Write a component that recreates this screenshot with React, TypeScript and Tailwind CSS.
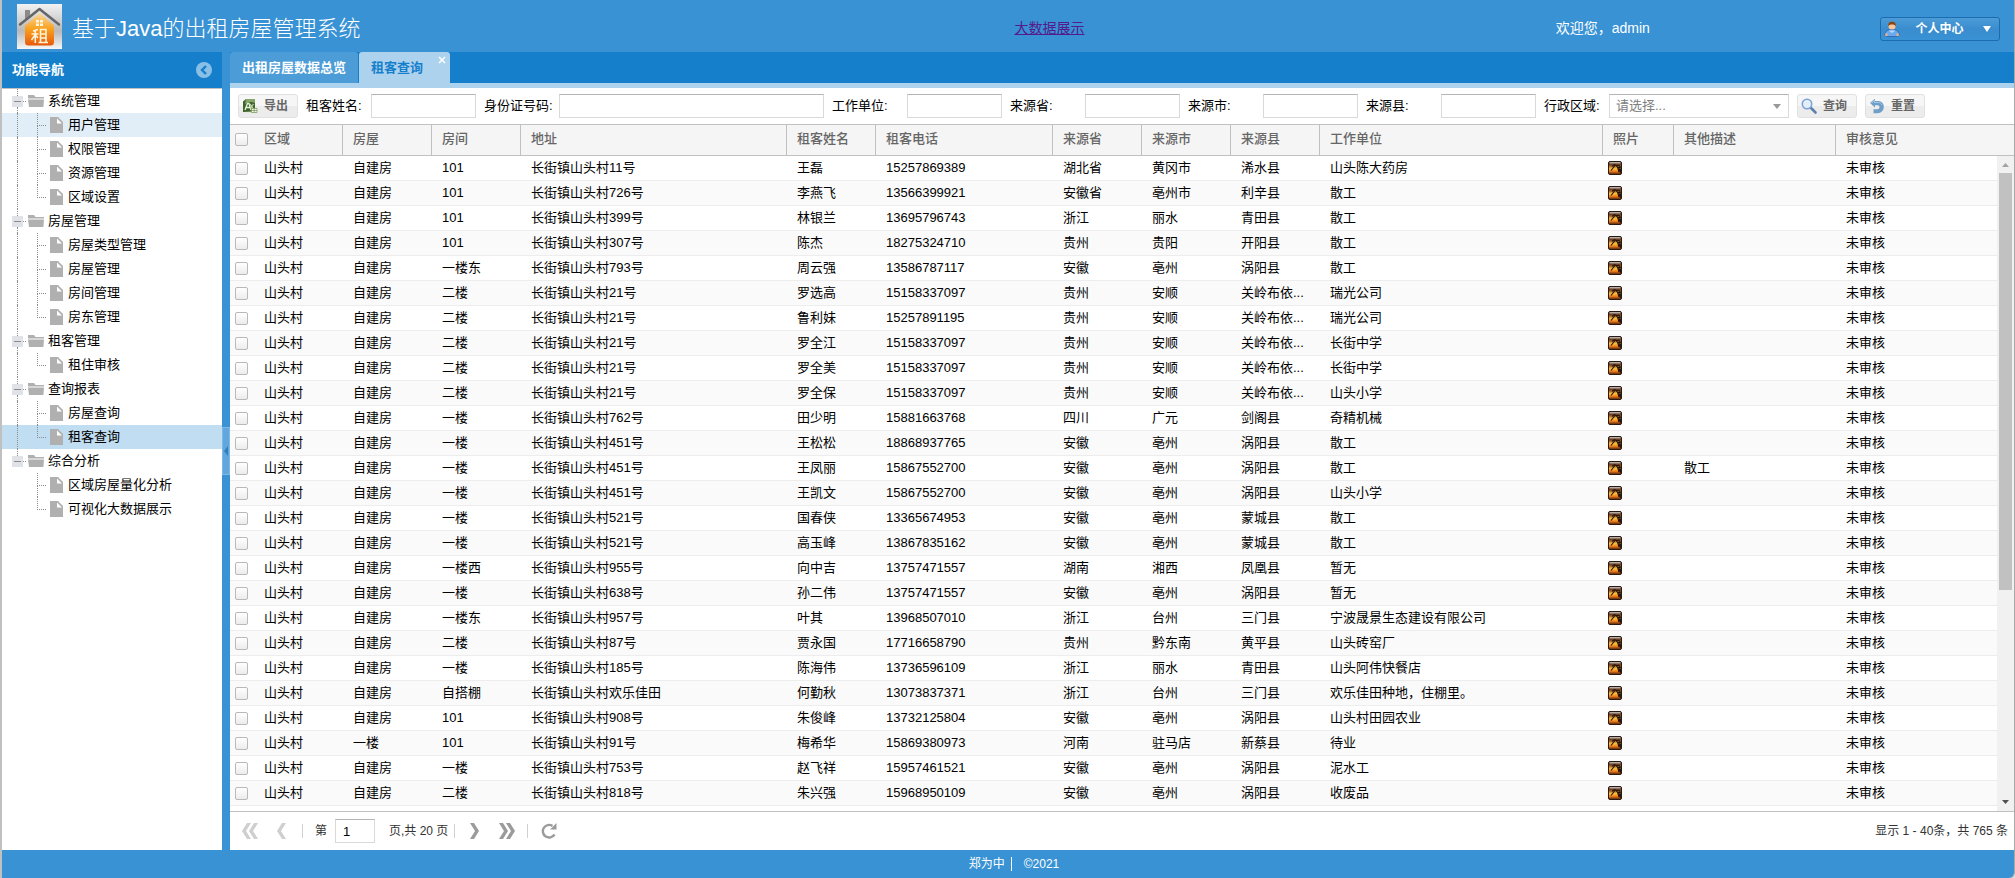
import { useId } from "react";

type Group = { name: string; items: string[] };

const groups: Group[] = [
  { name: "系统管理", items: ["用户管理", "权限管理", "资源管理", "区域设置"] },
  { name: "房屋管理", items: ["房屋类型管理", "房屋管理", "房间管理", "房东管理"] },
  { name: "租客管理", items: ["租住审核"] },
  { name: "查询报表", items: ["房屋查询", "租客查询"] },
  { name: "综合分析", items: ["区域房屋量化分析", "可视化大数据展示"] },
];

const columns = [
  { name: "区域", width: 89 },
  { name: "房屋", width: 89 },
  { name: "房间", width: 89 },
  { name: "地址", width: 266 },
  { name: "租客姓名", width: 89 },
  { name: "租客电话", width: 177 },
  { name: "来源省", width: 89 },
  { name: "来源市", width: 89 },
  { name: "来源县", width: 89 },
  { name: "工作单位", width: 283 },
  { name: "照片", width: 71 },
  { name: "其他描述", width: 162 },
  { name: "审核意见", width: 161 },
];

// 房屋, 房间, 门牌, 姓名, 电话, 省, 市, 县, 工作单位, 其他描述
const tenants: string[][] = [
  ["自建房", "101", "11号", "王磊", "15257869389", "湖北省", "黄冈市", "浠水县", "山头陈大药房", ""],
  ["自建房", "101", "726号", "李燕飞", "13566399921", "安徽省", "亳州市", "利辛县", "散工", ""],
  ["自建房", "101", "399号", "林银兰", "13695796743", "浙江", "丽水", "青田县", "散工", ""],
  ["自建房", "101", "307号", "陈杰", "18275324710", "贵州", "贵阳", "开阳县", "散工", ""],
  ["自建房", "一楼东", "793号", "周云强", "13586787117", "安徽", "亳州", "涡阳县", "散工", ""],
  ["自建房", "二楼", "21号", "罗选高", "15158337097", "贵州", "安顺", "关岭布依...", "瑞光公司", ""],
  ["自建房", "二楼", "21号", "鲁利妹", "15257891195", "贵州", "安顺", "关岭布依...", "瑞光公司", ""],
  ["自建房", "二楼", "21号", "罗全江", "15158337097", "贵州", "安顺", "关岭布依...", "长街中学", ""],
  ["自建房", "二楼", "21号", "罗全美", "15158337097", "贵州", "安顺", "关岭布依...", "长街中学", ""],
  ["自建房", "二楼", "21号", "罗全保", "15158337097", "贵州", "安顺", "关岭布依...", "山头小学", ""],
  ["自建房", "一楼", "762号", "田少明", "15881663768", "四川", "广元", "剑阁县", "奇精机械", ""],
  ["自建房", "一楼", "451号", "王松松", "18868937765", "安徽", "亳州", "涡阳县", "散工", ""],
  ["自建房", "一楼", "451号", "王凤丽", "15867552700", "安徽", "亳州", "涡阳县", "散工", "散工"],
  ["自建房", "一楼", "451号", "王凯文", "15867552700", "安徽", "亳州", "涡阳县", "山头小学", ""],
  ["自建房", "一楼", "521号", "国春侠", "13365674953", "安徽", "亳州", "蒙城县", "散工", ""],
  ["自建房", "一楼", "521号", "高玉峰", "13867835162", "安徽", "亳州", "蒙城县", "散工", ""],
  ["自建房", "一楼西", "955号", "向中吉", "13757471557", "湖南", "湘西", "凤凰县", "暂无", ""],
  ["自建房", "一楼", "638号", "孙二伟", "13757471557", "安徽", "亳州", "涡阳县", "暂无", ""],
  ["自建房", "一楼东", "957号", "叶其", "13968507010", "浙江", "台州", "三门县", "宁波晟景生态建设有限公司", ""],
  ["自建房", "二楼", "87号", "贾永国", "17716658790", "贵州", "黔东南", "黄平县", "山头砖窑厂", ""],
  ["自建房", "一楼", "185号", "陈海伟", "13736596109", "浙江", "丽水", "青田县", "山头阿伟快餐店", ""],
  ["自建房", "自搭棚", "欢乐佳田", "何勤秋", "13073837371", "浙江", "台州", "三门县", "欢乐佳田种地，住棚里。", ""],
  ["自建房", "101", "908号", "朱俊峰", "13732125804", "安徽", "亳州", "涡阳县", "山头村田园农业", ""],
  ["一楼", "101", "91号", "梅希华", "15869380973", "河南", "驻马店", "新蔡县", "待业", ""],
  ["自建房", "一楼", "753号", "赵飞祥", "15957461521", "安徽", "亳州", "涡阳县", "泥水工", ""],
  ["自建房", "二楼", "818号", "朱兴强", "15968950109", "安徽", "亳州", "涡阳县", "收废品", ""],
];

function Logo() {
  return (
    <svg viewBox="0 0 45 45" className="size-[45px] shrink-0" aria-hidden="true">
      <defs>
        <linearGradient id="logoBg" x1="0" y1="0" x2="0" y2="1">
          <stop offset="0" stopColor="#f2f2f2" />
          <stop offset="0.6" stopColor="#b9b9b9" />
          <stop offset="1" stopColor="#f6f6f6" />
        </linearGradient>
        <linearGradient id="logoHouse" x1="0" y1="0" x2="0" y2="1">
          <stop offset="0" stopColor="#fbd9a0" />
          <stop offset="0.5" stopColor="#f9a01c" />
          <stop offset="1" stopColor="#e8590c" />
        </linearGradient>
      </defs>
      <rect width="45" height="45" fill="url(#logoBg)" />
      <path d="M8 6h5v5l-5 5z" fill="#8a8a8a" />
      <path d="M22.500 9 L37 21.500 V38 a3.500 3.500 0 0 1-3.500 3.500 H11.500 A3.500 3.500 0 0 1 8 38 V21.500Z" fill="url(#logoHouse)" />
      <path d="M3 20.500 22.500 5 42 20.500" fill="none" stroke="#666" strokeWidth="2.500" strokeLinecap="round" strokeLinejoin="round" />
      <path d="M19 16h3v2.500h-3zM23 16h3v2.500h-3zM19 19.500h3V22h-3zM23 19.500h3V22h-3z" fill="#fff6dc" />
      <path
        d="M21 25.500 16 27M14.500 30h7M18.300 26.500V39M18 31l-3.500 5M18.500 31l2.500 3M23.500 38.500V25.500H29V38.500M23.500 30H29M23.500 34H29M21.500 38.500H31"
        stroke="#fff3d8"
        strokeWidth="1.600"
        fill="none"
      />
    </svg>
  );
}

function FolderIcon() {
  return (
    <svg viewBox="0 0 16 12" className="h-3 w-4 shrink-0" aria-hidden="true">
      <path d="M0 0h6l1.500 2H16v1.500H0z" fill="#b0b0b0" />
      <path d="M0 4.500h16l-.6 7.500H1z" fill="#b0b0b0" />
    </svg>
  );
}

function PageIcon() {
  return (
    <svg viewBox="0 0 13 16" className="h-4 w-[13px] shrink-0" aria-hidden="true">
      <path d="M0 0h8l5 5v11H0z" fill="#b0b0b0" />
      <path d="M7 1.500v5h5z" fill="#fff" />
    </svg>
  );
}

function ExcelIcon() {
  return (
    <svg viewBox="0 0 16 16" className="size-4 shrink-0" aria-hidden="true">
      <path d="M1 3.500 4 1.500h8.500V10H15v5H9l-8-1z" fill="#dfe8d4" />
      <path d="M1 3.500 4 1h9v9l-2 3.500-10 .5z" fill="#3f6329" />
      <path d="M4 1h9v4C9 3 6 4 3 6z" fill="#86a66c" />
      <path d="M3 12 5.500 5.500h1.500L9 12M4 9.500h4" stroke="#e9f2df" strokeWidth="1.300" fill="none" />
      <path d="M8 6l3.500 5M11.500 6 8 11" stroke="#c3dbae" strokeWidth="1.200" />
      <path d="M9.500 10.500h5.500v4H9.500zM12.200 10.500v4M9.500 12.500H15" stroke="#7e9d62" fill="#f4f8ef" strokeWidth="0.800" />
    </svg>
  );
}

function SearchIcon() {
  return (
    <svg viewBox="0 0 16 16" className="size-4 shrink-0" aria-hidden="true">
      <path d="m9.500 9.500 5 5" stroke="#5f7fae" strokeWidth="2.600" strokeLinecap="round" />
      <circle cx="6" cy="6" r="4.700" fill="#e4eefb" stroke="#7ba3d6" strokeWidth="1.600" />
    </svg>
  );
}

function ResetIcon() {
  return (
    <svg viewBox="0 0 16 16" className="size-4 shrink-0" aria-hidden="true">
      <path d="M1 5 6 .8v2.200h3.500a5.500 5.500 0 0 1 5.300 5.800c0 3.700-2.500 6.400-6.300 6.400H4.500v-4h3.700c1.500 0 2.300-.8 2.300-2 0-1.200-.8-2-2.300-2H6v2.200z" fill="#6f9fc6" />
      <path d="M2.500 5 5.500 2.500v2h4c1.500 0 3 1 3.600 2.500" fill="none" stroke="#a9cbe4" strokeWidth="0.900" />
    </svg>
  );
}

function UserIcon() {
  return (
    <svg viewBox="0 0 16 16" className="size-4 shrink-0" aria-hidden="true">
      <path d="M1 14c0-3.500 2.500-5.500 7-5.500s7 2 7 5.500l-2 1.500H3z" fill="#6ba9ee" stroke="#2b5fae" strokeWidth="0.800" />
      <path d="M1 12.500h2.500V15H1.500zM12.500 12.500H15l-.5 2.500h-2z" fill="#f4b183" />
      <path d="M4.500 9.500 8 12l3.500-2.500" fill="#b7dafb" />
      <circle cx="8" cy="5" r="3.600" fill="#f8c79c" />
      <path d="M4.200 5.500C3.800 2 5.500.8 8 .8s4.200 1.200 3.800 4.700C11 4 10 3.500 8 3.500s-3 .5-3.800 2z" fill="#8a4413" />
    </svg>
  );
}

function PhotoIcon() {
  return (
    <svg viewBox="0 0 14 14" className="size-3.5" aria-hidden="true">
      <defs>
        <linearGradient id="sunset" x1="0" y1="0" x2="0" y2="1">
          <stop offset="0" stopColor="#3a1f18" />
          <stop offset="0.3" stopColor="#8a4a22" />
          <stop offset="0.55" stopColor="#ffc23a" />
          <stop offset="0.75" stopColor="#f07f1c" />
          <stop offset="1" stopColor="#4a1c08" />
        </linearGradient>
      </defs>
      <rect x="0.500" y="0.500" width="13" height="13" rx="1.500" fill="url(#sunset)" stroke="#2a1a14" />
      <path d="M1.500 1h11v1.500h-11z" fill="#b5aea8" />
      <path d="M4 5.500C6 3 8 3.500 8.500 5 10 3.500 12 4.500 12.500 7L9.500 6l1.500 5M7 4.500 3 9.500" stroke="#1c100a" strokeWidth="1.100" fill="none" />
      <path d="M10 6.500 13 8v4l-1.500-.5z" fill="#2a140b" />
    </svg>
  );
}

function Tree() {
  const line = "border-dotted border-[#8b8b8b]";
  return (
    <ul className="min-h-0 flex-1 overflow-hidden text-[13px] leading-6">
      {groups.map((group, g) => {
        const lastGroup = g === groups.length - 1;
        return (
          <li key={group.name}>
            <div className="flex h-6 items-center pl-[10px]">
              <span className="flex h-6 w-[11px] flex-col items-center">
                <span className={`h-[7px] w-px border-l ${line}`} />
                <span className="flex h-[11px] w-[11px] items-center bg-[#dfe3e8] px-[2px]">
                  <span className="h-px w-full bg-[#8b8b8b]" />
                </span>
                <span className={lastGroup ? "h-[6px]" : `h-[6px] w-px border-l ${line}`} />
              </span>
              <span className={`mr-[2px] w-[3px] border-t ${line}`} />
              <FolderIcon />
              <span className="ml-1">{group.name}</span>
            </div>
            <ul>
              {group.items.map((item, i) => {
                const last = i === group.items.length - 1;
                const tone = item === "租客查询" ? "bg-[#c1ddf1]" : item === "用户管理" ? "bg-[#e1eef8]" : "";
                return (
                  <li key={item} className={tone}>
                    <a href="#" className="flex h-6 items-center pl-[15px]">
                      <span className={lastGroup ? "h-6 w-5" : `h-6 w-5 border-l ${line}`} />
                      <span className="flex h-6 w-[13px] flex-col">
                        <span className={`h-[13px] w-[9px] border-b border-l ${line}`} />
                        {!last && <span className={`h-[11px] w-px border-l ${line}`} />}
                      </span>
                      <PageIcon />
                      <span className="ml-[5px]">{item}</span>
                    </a>
                  </li>
                );
              })}
            </ul>
          </li>
        );
      })}
    </ul>
  );
}

const boxStyle = "h-6 border border-[#d9d9d9] border-t-[#b5b5b5] bg-white";

function Field({ label, labelWidth, inputWidth }: { label: string; labelWidth: string; inputWidth: string }) {
  const id = useId();
  return (
    <div className="flex items-center">
      <label htmlFor={id} className={labelWidth}>
        {label}:
      </label>
      <input id={id} type="text" className={`${boxStyle} ${inputWidth} px-[6px] outline-none`} />
    </div>
  );
}

function ToolButton({ icon, text }: { icon: React.ReactNode; text: string }) {
  return (
    <button
      type="button"
      className="flex h-6 w-[60px] items-center rounded-[3px] border border-[#e1e1e1] bg-linear-to-b from-[#f6f6f6] from-50% to-[#ececec] to-50% pl-[3px] text-xs font-bold text-[#666]"
    >
      {icon}
      <span className="ml-1.5">{text}</span>
    </button>
  );
}

function Toolbar() {
  const id = useId();
  return (
    <div className="flex h-9 shrink-0 items-center gap-2 overflow-hidden bg-white px-2 text-[13px] whitespace-nowrap">
      <ToolButton icon={<ExcelIcon />} text="导出" />
      <Field label="租客姓名" labelWidth="w-[65px]" inputWidth="w-[105px]" />
      <Field label="身份证号码" labelWidth="w-[75px]" inputWidth="w-[265px]" />
      <Field label="工作单位" labelWidth="w-[75px]" inputWidth="w-[95px]" />
      <Field label="来源省" labelWidth="w-[75px]" inputWidth="w-[95px]" />
      <Field label="来源市" labelWidth="w-[75px]" inputWidth="w-[95px]" />
      <Field label="来源县" labelWidth="w-[75px]" inputWidth="w-[95px]" />
      <div className="flex items-center">
        <label htmlFor={id} className="w-[65px]">
          行政区域:
        </label>
        <span className="relative flex">
          <select id={id} className={`${boxStyle} w-[180px] appearance-none px-[6px] text-[#808080] outline-none`}>
            <option>请选择...</option>
          </select>
          <svg viewBox="0 0 8 5" className="pointer-events-none absolute top-[10px] right-2 h-[5px] w-2" aria-hidden="true">
            <path d="M0 0h8L4 5z" fill="#999" />
          </svg>
        </span>
      </div>
      <ToolButton icon={<SearchIcon />} text="查询" />
      <ToolButton icon={<ResetIcon />} text="重置" />
    </div>
  );
}

const checkStyle =
  "block size-[13px] appearance-none rounded-[2px] border border-[#b9b9b9] bg-linear-to-b from-white to-[#ececec]";

function Grid() {
  return (
    <div className="flex min-h-0 flex-1 bg-white">
      <div className="min-w-0 flex-1 overflow-auto [scrollbar-width:none]">
        <table className="w-full table-fixed border-separate border-spacing-0 text-left text-[13px]">
          <colgroup>
            <col className="w-6" />
            {columns.map((c) => (
              <col key={c.name} style={{ width: c.width }} />
            ))}
          </colgroup>
          <thead>
            <tr className="h-8">
              <th className="sticky top-0 border-y border-[#c0c0c0] bg-[#f5f5f5] pb-px pl-[5px]">
                <input type="checkbox" aria-label="全选" className={checkStyle} />
              </th>
              {columns.map((c, i) => (
                <th
                  key={c.name}
                  className={`sticky top-0 truncate border-y border-[#c0c0c0] bg-[#f5f5f5] pb-[2px] pl-[10px] font-medium text-[#666] ${
                    i < columns.length - 1 ? "border-r" : ""
                  }`}
                >
                  {c.name}
                </th>
              ))}
            </tr>
          </thead>
          <tbody>
            {tenants.map((t, r) => {
              const [house, room, door, name, phone, province, city, county, job, note] = t;
              const cells = ["山头村", house, room, `长街镇山头村${door}`, name, phone, province, city, county, job];
              return (
                <tr key={r} className="h-[25px] odd:bg-white even:bg-[#fafafa]">
                  <td className="border-b border-[#ededed] pl-[5px]">
                    <input type="checkbox" aria-label={name} className={checkStyle} />
                  </td>
                  {cells.map((cell, i) => (
                    <td key={i} className="truncate border-b border-[#ededed] pl-[10px]">
                      {cell}
                    </td>
                  ))}
                  <td className="border-b border-[#ededed] pl-[5px]">
                    <PhotoIcon />
                  </td>
                  <td className="truncate border-b border-[#ededed] pl-[10px]">{note}</td>
                  <td className="truncate border-b border-[#ededed] pl-[10px]">未审核</td>
                </tr>
              );
            })}
          </tbody>
        </table>
      </div>
      <div className="flex w-[17px] shrink-0 flex-col">
        <div className="h-8 shrink-0 border-y border-[#c0c0c0] bg-[#f5f5f5]" />
        <div className="flex min-h-0 flex-1 flex-col items-center bg-[#f1f1f1]">
          <svg viewBox="0 0 17 17" className="h-[17px] w-[17px] shrink-0" aria-hidden="true">
            <path d="M5 11h7L8.500 7z" fill="#a3a3a3" />
          </svg>
          <div className="w-[13px] flex-[418] bg-[#c1c1c1]" />
          <div className="flex-[204]" />
          <svg viewBox="0 0 17 17" className="h-[17px] w-[17px] shrink-0" aria-hidden="true">
            <path d="M5 6h7L8.500 10z" fill="#505050" />
          </svg>
        </div>
      </div>
    </div>
  );
}

function PageButton({ label, path, color }: { label: string; path: string; color: string }) {
  return (
    <button type="button" aria-label={label} className="flex size-[18px] shrink-0 items-center justify-center">
      <svg viewBox="0 0 18 18" className="size-[18px]" aria-hidden="true">
        <path d={path} fill={color} />
      </svg>
    </button>
  );
}

function Pager() {
  const id = useId();
  const bar = "h-[14px] w-px bg-[#d0d0d0]";
  return (
    <div className="flex h-[39px] shrink-0 items-center border-t border-[#c0c0c0] bg-white pr-[6px] pl-[11px] text-xs text-[#333]">
      <PageButton label="第一页" color="#cfcfcf" path="M6 1h4L5 9l5 8H6L1 9zM13 1h4l-5 8 5 8h-4L8 9z" />
      <span className="w-3.5" />
      <PageButton label="上一页" color="#cfcfcf" path="M9 1h4L8 9l5 8H9L4 9z" />
      <span className={`${bar} ml-[11px]`} />
      <label htmlFor={id} className="ml-3 w-5">
        第
      </label>
      <input id={id} type="text" defaultValue="1" className={`${boxStyle} w-10 px-[7px] text-[13px] text-black outline-none`} />
      <span className="ml-[14px]">页,共 20 页</span>
      <span className={`${bar} mr-[10px] ml-1.5`} />
      <PageButton label="下一页" color="#9b9b9b" path="M5 1h4l5 8-5 8H5l5-8z" />
      <span className="w-[15px]" />
      <PageButton label="最后一页" color="#9b9b9b" path="M1 1h4l5 8-5 8H1l5-8zM8 1h4l5 8-5 8H8l5-8z" />
      <span className={`${bar} mr-3 ml-[11px]`} />
      <button type="button" aria-label="刷新" className="size-[18px]">
        <svg viewBox="0 0 18 18" className="size-[18px]" aria-hidden="true">
          <path d="M12.500 3.900A6.300 6.300 0 1 0 14.500 12.500" fill="none" stroke="#9b9b9b" strokeWidth="2.400" />
          <path d="M16.500 1v6.500H10z" fill="#9b9b9b" />
        </svg>
      </button>
      <span className="ml-auto">显示 1 - 40条，共 765 条</span>
    </div>
  );
}

function Header() {
  return (
    <header className="grid h-[52px] shrink-0 grid-cols-[1012fr_541fr_324fr_134fr] items-center text-white">
      <div className="flex items-center gap-[10px] pl-[15px] text-[22px]">
        <Logo />
        <h1 className="mt-1 font-light whitespace-nowrap">基于Java的出租房屋管理系统</h1>
      </div>
      <div className="mt-1 text-sm">
        <a href="#" className="text-[#551a8b] underline">
          大数据展示
        </a>
      </div>
      <div className="mt-1 text-sm whitespace-nowrap">欢迎您，admin</div>
      <button
        type="button"
        className="mt-1.5 flex h-6 w-[120px] items-center rounded-[3px] border border-[#1c6db0] bg-linear-to-b from-[#4b9cd7] via-[#3a8dce] via-50% to-[#3892d4] pl-[3px] text-xs font-bold"
      >
        <UserIcon />
        <span className="mr-1 flex-1 text-center">个人中心</span>
        <svg viewBox="0 0 8 6" className="mr-2 h-1.5 w-2" aria-hidden="true">
          <path d="M0 0h8L4 6z" fill="#fff" />
        </svg>
      </button>
    </header>
  );
}

export default function App() {
  return (
    <div className="h-screen bg-[#d8d8d8] font-['Liberation_Sans','Noto_Sans_CJK_SC',sans-serif] text-black">
      <div className="flex h-full flex-col overflow-hidden rounded-br-[6px] border-r border-l-2 border-r-[#a8a8a8] border-l-[#c0c0c0] bg-[#3892d4]">
        <Header />
        <div className="flex min-h-0 flex-1">
          <nav className="flex w-[220px] shrink-0 flex-col bg-white">
            <div className="flex h-[37px] shrink-0 items-center justify-between border-b border-[#c0c0c0] bg-[#157fcc] px-[10px] text-[13px] font-bold text-white">
              功能导航
              <button type="button" aria-label="收起" className="size-4">
                <svg viewBox="0 0 16 16" className="size-4" aria-hidden="true">
                  <circle cx="8" cy="8" r="8" fill="#8abfe6" />
                  <path d="M10 4 6 8l4 4" fill="none" stroke="#157fcc" strokeWidth="2.400" />
                </svg>
              </button>
            </div>
            <Tree />
          </nav>
          <div className="flex w-2 shrink-0 items-center bg-[#3892d4]">
            <button type="button" aria-label="折叠" className="flex h-12 w-2 items-center justify-center border border-[#7db8e4] bg-[#5fa7dc]">
              <svg viewBox="0 0 4 10" className="h-[10px] w-1" aria-hidden="true">
                <path d="M4 0v10L0 5z" fill="#3080c0" />
              </svg>
            </button>
          </div>
          <main className="flex min-w-0 flex-1 flex-col">
            <div className="flex h-9 shrink-0 border-b-[5px] border-[#add2ed] bg-[#157fcc] text-[13px] font-bold">
              <button type="button" className="w-32 rounded-t-[3px] bg-[#4b9cd7] text-white">
                出租房屋数据总览
              </button>
              <div className="ml-px flex w-[91px] items-start justify-between rounded-t-[3px] bg-[#add2ed] pr-1 pl-3 text-[#157fcc]">
                <button type="button" className="h-[31px]">
                  租客查询
                </button>
                <button type="button" aria-label="关闭" className="mt-[4px] size-2">
                  <svg viewBox="0 0 8 8" className="size-2" aria-hidden="true">
                    <path d="m1 1 6 6M7 1 1 7" stroke="#fff" strokeWidth="1.500" />
                  </svg>
                </button>
              </div>
            </div>
            <Toolbar />
            <Grid />
            <Pager />
          </main>
        </div>
        <footer className="flex h-7 shrink-0 items-center justify-center pl-3 text-xs text-white">
          郑为中<span className="mr-3 ml-1.5 h-[14px] w-px bg-white" />©2021
        </footer>
      </div>
    </div>
  );
}
